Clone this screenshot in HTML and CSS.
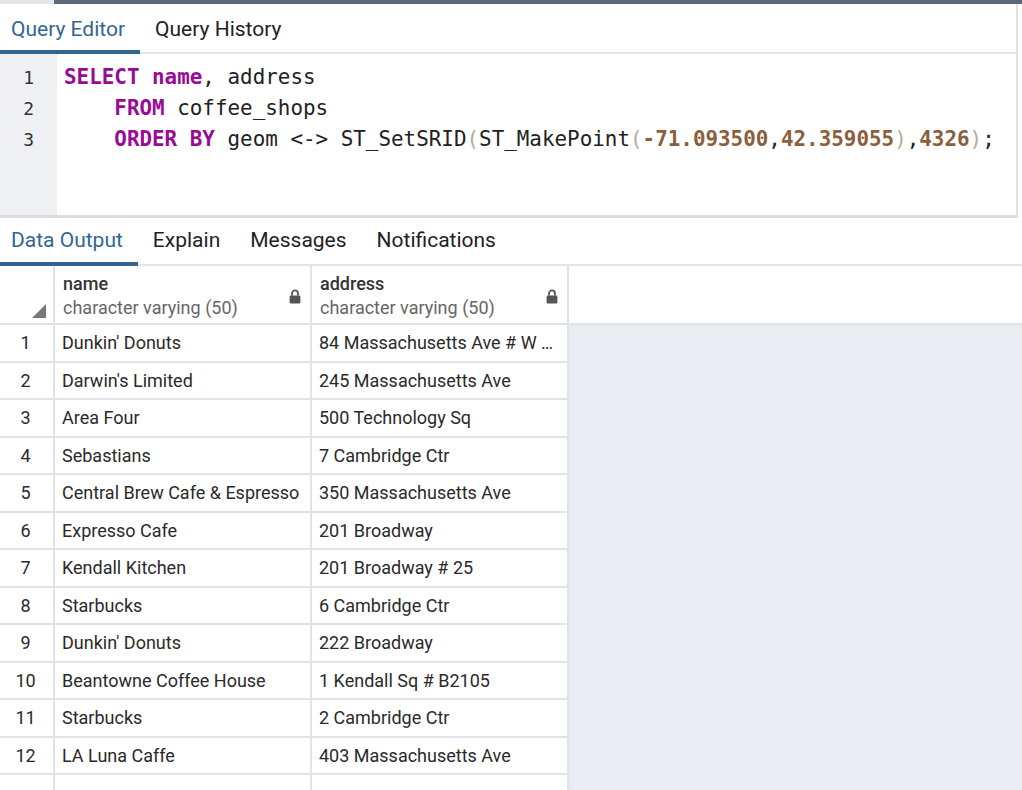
FILE: index.html
```html
<!DOCTYPE html>
<html>
<head>
<meta charset="utf-8">
<link rel="stylesheet" href="styles.css">
</head>
<body>
<div class="app">
  <div class="topstrip"><div class="strip-left"></div><div class="strip-right"></div></div>
  <div class="panel">
    <div class="tabs tabs-top">
      <div class="tab active">Query Editor</div>
      <div class="tab">Query History</div>
    </div>
    <div class="editor">
      <div class="gutter">
        <div class="ln">1</div>
        <div class="ln">2</div>
        <div class="ln">3</div>
      </div>
      <div class="code">
        <div class="cl"><span class="kw">SELECT</span> <span class="kw">name</span>, address</div>
        <div class="cl">    <span class="kw">FROM</span> coffee_shops</div>
        <div class="cl">    <span class="kw">ORDER</span> <span class="kw">BY</span> geom &lt;-&gt; ST_SetSRID<span class="par">(</span>ST_MakePoint<span class="par">(</span><span class="num">-71.093500</span>,<span class="num">42.359055</span><span class="par">)</span>,<span class="num">4326</span><span class="par">)</span>;</div>
      </div>
    </div>
  </div>
  <div class="tabs tabs-bottom">
    <div class="tab active">Data Output</div>
    <div class="tab">Explain</div>
    <div class="tab">Messages</div>
    <div class="tab">Notifications</div>
  </div>
  <div class="grid">
    <div class="hrow">
      <div class="cell c0 hcorner"><span class="sorttri"></span></div>
      <div class="cell c1 hcell">
        <div class="htext"><div class="hname">name</div><div class="htype">character varying (50)</div></div>
        <svg class="lock" width="12" height="15" viewBox="0 0 12 15"><path d="M3 6.5V4.4a3 3 0 0 1 6 0V6.5" fill="none" stroke="#555" stroke-width="1.8"/><rect x="0.6" y="6.4" width="10.8" height="8.2" rx="1.4" fill="#555"/></svg>
      </div>
      <div class="cell c2 hcell">
        <div class="htext"><div class="hname">address</div><div class="htype">character varying (50)</div></div>
        <svg class="lock" width="12" height="15" viewBox="0 0 12 15"><path d="M3 6.5V4.4a3 3 0 0 1 6 0V6.5" fill="none" stroke="#555" stroke-width="1.8"/><rect x="0.6" y="6.4" width="10.8" height="8.2" rx="1.4" fill="#555"/></svg>
      </div>
    </div>
    <div class="row"><div class="cell c0">1</div><div class="cell c1">Dunkin' Donuts</div><div class="cell c2">84 Massachusetts Ave # W …</div></div>
    <div class="row"><div class="cell c0">2</div><div class="cell c1">Darwin's Limited</div><div class="cell c2">245 Massachusetts Ave</div></div>
    <div class="row"><div class="cell c0">3</div><div class="cell c1">Area Four</div><div class="cell c2">500 Technology Sq</div></div>
    <div class="row"><div class="cell c0">4</div><div class="cell c1">Sebastians</div><div class="cell c2">7 Cambridge Ctr</div></div>
    <div class="row"><div class="cell c0">5</div><div class="cell c1">Central Brew Cafe &amp; Espresso</div><div class="cell c2">350 Massachusetts Ave</div></div>
    <div class="row"><div class="cell c0">6</div><div class="cell c1">Expresso Cafe</div><div class="cell c2">201 Broadway</div></div>
    <div class="row"><div class="cell c0">7</div><div class="cell c1">Kendall Kitchen</div><div class="cell c2">201 Broadway # 25</div></div>
    <div class="row"><div class="cell c0">8</div><div class="cell c1">Starbucks</div><div class="cell c2">6 Cambridge Ctr</div></div>
    <div class="row"><div class="cell c0">9</div><div class="cell c1">Dunkin' Donuts</div><div class="cell c2">222 Broadway</div></div>
    <div class="row"><div class="cell c0">10</div><div class="cell c1">Beantowne Coffee House</div><div class="cell c2">1 Kendall Sq # B2105</div></div>
    <div class="row"><div class="cell c0">11</div><div class="cell c1">Starbucks</div><div class="cell c2">2 Cambridge Ctr</div></div>
    <div class="row"><div class="cell c0">12</div><div class="cell c1">LA Luna Caffe</div><div class="cell c2">403 Massachusetts Ave</div></div>
    <div class="row"><div class="cell c0"></div><div class="cell c1"></div><div class="cell c2"></div></div>
  </div>
</div>
</body>
</html>
```

FILE: styles.css
```css
html, body {
  margin: 0;
  padding: 0;
  width: 1022px;
  height: 790px;
  overflow: hidden;
  background: #ffffff;
  font-family: Roboto, "Liberation Sans", sans-serif;
}

.app {
  display: flex;
  flex-direction: column;
  width: 1022px;
  height: 790px;
  overflow: hidden;
}

.topstrip {
  display: flex;
  height: 4px;
  flex: none;
}
.strip-left { width: 54px; background: #e4e5e8; }
.strip-right { flex: 1; background: #5a6a7a; }

.panel {
  width: 1016px;
  border-right: 2px solid #e0e1e5;
  flex: none;
}

.tabs {
  display: flex;
  align-items: stretch;
  flex: none;
  border-bottom: 2px solid #e3e4e8;
}
.tabs-top { height: 48px; }
.tabs-bottom { height: 46px; }
.tabs-top .tab { padding-top: 4px; }

.tab {
  display: flex;
  align-items: center;
  padding: 0 15px 0 15px;
  font-size: 21px;
  color: #222222;
  border-bottom: 4px solid transparent;
  margin-bottom: -2px;
  box-sizing: border-box;
}
.tab:first-child { padding-left: 11px; padding-right: 15px; }
.tab.active {
  color: #326690;
  border-bottom-color: #326690;
}

.editor {
  display: flex;
  height: 161px;
  border-bottom: 3px solid #dcdde2;
  width: 1016px;
}
.gutter {
  width: 57px;
  background: #eef0f3;
  padding-top: 8px;
  box-sizing: border-box;
}
.ln {
  height: 31px;
  line-height: 31px;
  font-family: "DejaVu Sans Mono", "Liberation Mono", monospace;
  font-size: 18px;
  color: #333;
  text-align: right;
  padding-right: 23px;
}
.code {
  padding-top: 8px;
  padding-left: 7px;
}
.cl {
  height: 31px;
  line-height: 31px;
  font-family: "DejaVu Sans Mono", "Liberation Mono", monospace;
  font-size: 20.9px;
  color: #222;
  white-space: pre;
}
.kw { color: #990b95; font-weight: bold; }
.num { color: #8b5e3c; font-weight: bold; }
.par { color: #b3ad99; }

.grid {
  flex: 1;
  background: #e9ecf0;
  overflow: hidden;
}
.hrow {
  display: flex;
  height: 59px;
  background: #ffffff;
  border-bottom: 2px solid #e0e2e6;
  box-sizing: border-box;
}
.row {
  display: flex;
  height: 37.5px;
}
.cell {
  box-sizing: border-box;
  border-right: 2px solid #e0e2e6;
  border-bottom: 2px solid #e0e2e6;
  background: #ffffff;
  display: flex;
  align-items: center;
  font-size: 18px;
  color: #2a2a2a;
  padding-left: 7px;
  white-space: nowrap;
  overflow: hidden;
}
.hrow .cell { border-bottom: none; }
.c0 { width: 55px; justify-content: center; padding-left: 0; padding-right: 2px; }
.c1 { width: 257px; }
.c2 { width: 257px; }

.hcorner { position: relative; }
.sorttri {
  position: absolute;
  right: 7px;
  bottom: 5px;
  width: 0;
  height: 0;
  border-left: 14px solid transparent;
  border-bottom: 14px solid #777777;
}
.hcell {
  justify-content: space-between;
  padding-left: 8px;
  padding-right: 9px;
  padding-top: 2px;
}
.htext { display: flex; flex-direction: column; gap: 2px; }
.hname { font-size: 18px; color: #333; font-weight: 500; line-height: 22px; }
.htype { font-size: 18px; color: #666; line-height: 22px; }
.lock { margin-top: 2px; }
```
